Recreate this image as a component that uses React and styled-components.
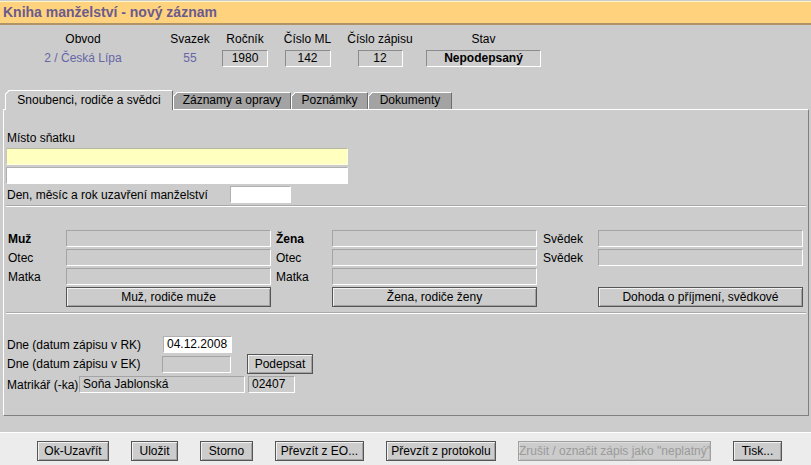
import React from 'react';
import styled, { createGlobalStyle } from 'styled-components';

const Global = createGlobalStyle`
  html, body { margin: 0; padding: 0; }
  body {
    background: #cccccc;
    font-family: "Liberation Sans", Arial, sans-serif;
    font-size: 12px;
    color: #000;
    width: 811px;
    height: 465px;
    overflow: hidden;
  }
  * { box-sizing: border-box; }
`;

const Page = styled.div`
  display: flex;
  flex-direction: column;
  height: 465px;
`;

const TitleBar = styled.div`
  margin-top: 1px;
  height: 24px;
  background: #ffd27e;
  border-top: 1px solid #fff6c8;
  border-bottom: 2px solid #b09468;
  padding-left: 3px;
  font-size: 14px;
  font-weight: bold;
  color: #6b5b8d;
  line-height: 21px;
  white-space: nowrap;
`;

const Header = styled.div`
  display: flex;
  padding: 7px 0 0 6px;
`;

const HCol = styled.div`
  width: ${p => p.w}px;
  display: flex;
  flex-direction: column;
  align-items: center;
  gap: 4px;
`;

const HLabel = styled.div`
  line-height: 14px;
  height: 14px;
`;

const HValue = styled.div`
  height: 17px;
  line-height: 17px;
  color: #6666a6;
`;

const HBox = styled.div`
  width: ${p => p.w}px;
  height: 17px;
  line-height: 15px;
  text-align: center;
  border: 1px solid;
  border-color: #8c8c8c #ffffff #ffffff #8c8c8c;
  font-weight: ${p => (p.bold ? 'bold' : 'normal')};
`;

const TabStrip = styled.div`
  display: flex;
  align-items: flex-end;
  height: 20px;
  margin: 23px 0 -1px 0;
  padding-left: 5px;
  position: relative;
  z-index: 1;
`;

const Tab = styled.div`
  position: relative;
  width: ${p => p.w}px;
  height: ${p => (p.active ? 20 : 17)}px;
  margin-bottom: ${p => (p.active ? 0 : 1)}px;
  text-align: center;
  line-height: ${p => (p.active ? 18 : 15)}px;
  background: ${p => (p.active ? '#cccccc' : '#a3a3a3')};
  border-top: 1px solid #ffffff;
  border-left: 1px solid #ffffff;
  border-right: 1px solid #6e6e6e;
  white-space: nowrap;
  clip-path: polygon(4px 0, 100% 0, 100% 100%, 0 100%, 0 4px);
  &::before {
    content: '';
    position: absolute;
    left: -1px;
    top: -1px;
    width: 6px;
    height: 6px;
    background: linear-gradient(135deg, transparent 2.6px, #ffffff 2.6px, #ffffff 3.7px, transparent 3.7px);
  }
`;

const Panel = styled.div`
  margin: 0 2px 0 3px;
  border-top: 1px solid #ffffff;
  border-left: 1px solid #ffffff;
  border-right: 1px solid #808080;
  border-bottom: 1px solid #808080;
  padding: 21px 2px 22px 2px;
  display: flex;
  flex-direction: column;
`;

const Label = styled.div`
  line-height: 14px;
  height: ${p => p.h || 14}px;
  padding-left: ${p => (p.pad === undefined ? 1 : p.pad)}px;
  width: ${p => (p.w ? `${p.w}px` : 'auto')};
  flex: none;
  font-weight: ${p => (p.bold ? 'bold' : 'normal')};
  display: flex;
  align-items: center;
  white-space: nowrap;
`;

const Input = styled.div`
  width: ${p => p.w}px;
  height: 17px;
  flex: none;
  margin-left: ${p => p.ml || 0}px;
  line-height: 15px;
  padding-left: ${p => p.pl || 3}px;
  background: ${p => (p.tone === 'yellow' ? '#ffffc0' : p.tone === 'white' ? '#ffffff' : '#cccccc')};
  border: 1px solid;
  border-color: ${p =>
    p.tone === 'yellow'
      ? '#b8b8a0 #ffffe0 #ffffe0 #c8c8b0'
      : p.tone === 'white'
      ? '#b0b0b0 #ffffff #ffffff #b0b0b0'
      : '#a4a4a4 #ffffff #ffffff #a4a4a4'};
  white-space: nowrap;
  overflow: hidden;
`;

const Stack = styled.div`
  display: flex;
  flex-direction: column;
  gap: ${p => p.gap || 0}px;
  margin-top: ${p => p.mt || 0}px;
`;

const Row = styled.div`
  display: flex;
  align-items: center;
  height: ${p => p.h || 17}px;
  margin-top: ${p => p.mt || 0}px;
`;

const Separator = styled.div`
  height: 2px;
  margin-top: ${p => p.mt}px;
  border-top: 1px solid #a8a8a8;
  border-bottom: 1px solid #ffffff;
`;

const PeopleGrid = styled.div`
  display: grid;
  grid-template-columns: 60px 205px 61px 205px 61px 205px;
  grid-template-rows: 17px 17px 17px 20px;
  row-gap: 2px;
  margin-top: 23px;
`;

const Button = styled.button`
  width: ${p => p.w}px;
  height: 20px;
  flex: none;
  margin-left: ${p => p.ml || 0}px;
  padding: 0;
  font-family: "Liberation Sans", Arial, sans-serif;
  font-size: 12px;
  color: ${p => (p.disabled ? '#9a9a9a' : '#000')};
  background: #cccccc;
  border: 1px solid ${p => (p.disabled ? '#a0a0a0' : '#555555')};
  box-shadow: inset 1px 1px 0 ${p => (p.disabled ? '#dedede' : '#f2f2f2')}, inset -1px -1px 0 ${p => (p.disabled ? '#bcbcbc' : '#a2a2a2')};
  white-space: nowrap;
  cursor: default;
`;

const GridButton = styled(Button)`
  width: auto;
  grid-column: ${p => p.col};
`;

const BottomBar = styled.div`
  margin-top: 16px;
  flex: 1;
  background: #ececec;
  border-top: 1px solid #ffffff;
  display: flex;
  gap: 22px;
  padding: 8px 0 0 37px;
`;

export default function App() {
  return (
    <Page>
      <Global />
      <TitleBar>Kniha manželství - nový záznam</TitleBar>

      <Header>
        <HCol w={154}>
          <HLabel>Obvod</HLabel>
          <HValue>2 / Česká Lípa</HValue>
        </HCol>
        <HCol w={60}>
          <HLabel>Svazek</HLabel>
          <HValue>55</HValue>
        </HCol>
        <HCol w={50}>
          <HLabel>Ročník</HLabel>
          <HBox w={46}>1980</HBox>
        </HCol>
        <HCol w={75}>
          <HLabel>Číslo ML</HLabel>
          <HBox w={46}>142</HBox>
        </HCol>
        <HCol w={70}>
          <HLabel>Číslo zápisu</HLabel>
          <HBox w={45}>12</HBox>
        </HCol>
        <HCol w={137}>
          <HLabel>Stav</HLabel>
          <HBox w={115} bold>Nepodepsaný</HBox>
        </HCol>
      </Header>

      <TabStrip>
        <Tab active w={168}>Snoubenci, rodiče a svědci</Tab>
        <Tab w={118}>Záznamy a opravy</Tab>
        <Tab w={77}>Poznámky</Tab>
        <Tab w={84}>Dokumenty</Tab>
      </TabStrip>

      <Panel>
        <Label>Místo sňatku</Label>
        <Stack gap={2} mt={3}>
          <Input w={342} tone="yellow" />
          <Input w={342} tone="white" />
          <Row>
            <Label w={224}>Den, měsíc a rok uzavření manželství</Label>
            <Input w={61} tone="white" />
          </Row>
        </Stack>

        <Separator mt={2} />

        <PeopleGrid>
          <Label h={17} pad={2} bold>Muž</Label>
          <Input w={205} />
          <Label h={17} pad={5} bold>Žena</Label>
          <Input w={205} />
          <Label h={17} pad={6}>Svědek</Label>
          <Input w={205} />

          <Label h={17} pad={2}>Otec</Label>
          <Input w={205} />
          <Label h={17} pad={5}>Otec</Label>
          <Input w={205} />
          <Label h={17} pad={6}>Svědek</Label>
          <Input w={205} />

          <Label h={17} pad={2}>Matka</Label>
          <Input w={205} />
          <Label h={17} pad={5}>Matka</Label>
          <Input w={205} />
          <div />
          <div />

          <GridButton col="2">Muž, rodiče muže</GridButton>
          <GridButton col="4">Žena, rodiče ženy</GridButton>
          <GridButton col="6">Dohoda o příjmení, svědkové</GridButton>
        </PeopleGrid>

        <Separator mt={5} />

        <Stack gap={1} mt={22}>
          <Row>
            <Label w={157}>Dne (datum zápisu v RK)</Label>
            <Input w={69} tone="white">04.12.2008</Input>
          </Row>
          <Row h={20}>
            <Label w={156}>Dne (datum zápisu v EK)</Label>
            <Input w={69} />
            <Button w={66} ml={16}>Podepsat</Button>
          </Row>
          <Row mt={1}>
            <Label w={73}>Matrikář (-ka)</Label>
            <Input w={166}>Soňa Jablonská</Input>
            <Input w={47} ml={3}>02407</Input>
          </Row>
        </Stack>
      </Panel>

      <BottomBar>
        <Button w={72}>Ok-Uzavřít</Button>
        <Button w={47}>Uložit</Button>
        <Button w={53}>Storno</Button>
        <Button w={89}>Převzít z EO...</Button>
        <Button w={110}>Převzít z protokolu</Button>
        <Button w={193} disabled>Zrušit / označit zápis jako "neplatný"</Button>
        <Button w={49}>Tisk...</Button>
      </BottomBar>
    </Page>
  );
}
